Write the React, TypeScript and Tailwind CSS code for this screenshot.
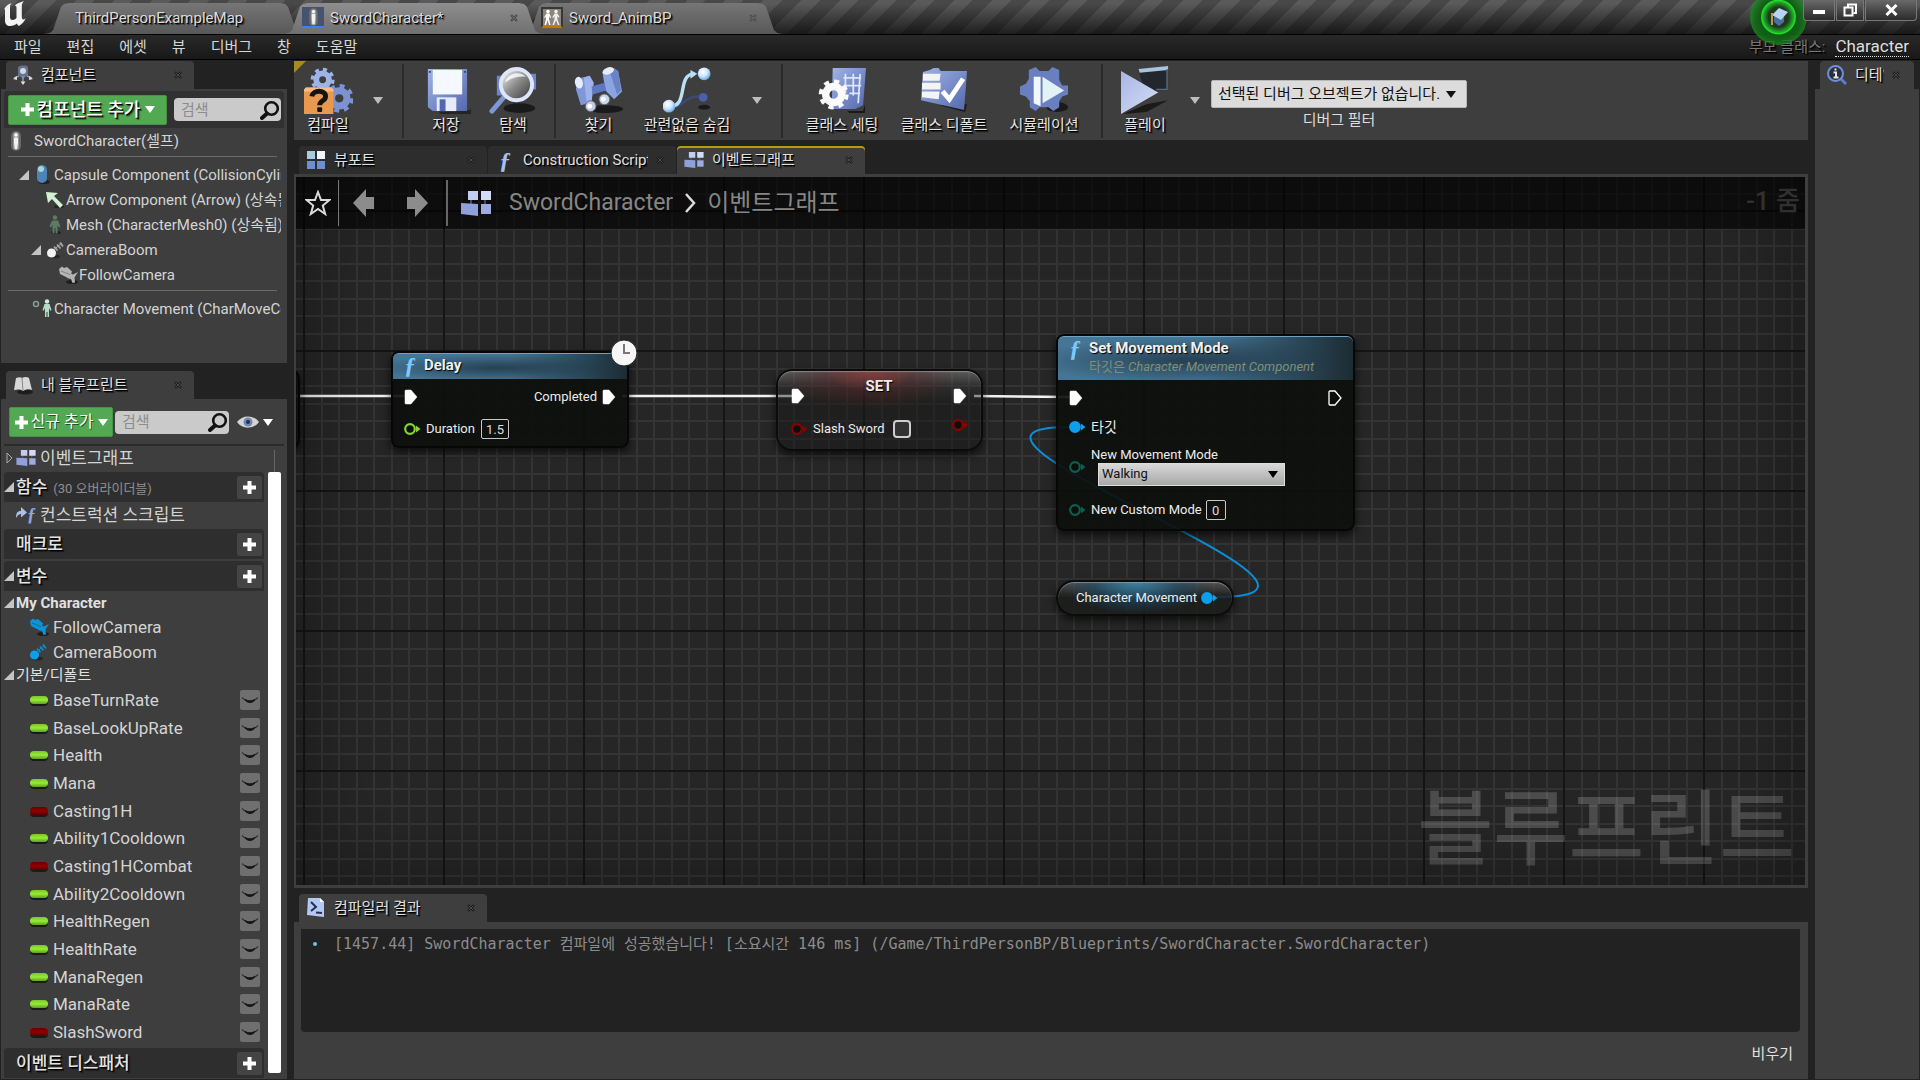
import type { ReactNode } from "react";
import { clsx } from "clsx";

const SHADOW = "[text-shadow:1px_1px_0_#000,2px_2px_1px_rgba(0,0,0,0.6)]";

/* ---------- small glyphs ---------- */

function Caret({ className }: { className?: string }) {
  return (
    <svg viewBox="0 0 10 7" className={clsx("h-[7px] w-[10px] shrink-0", className)} aria-hidden="true">
      <path d="M0 0h10L5 7z" fill="currentColor" />
    </svg>
  );
}

function Expander() {
  return (
    <svg viewBox="0 0 10 10" className="h-[10px] w-[10px] shrink-0" aria-hidden="true">
      <path d="M10 0v10H0z" fill="#c4c4c4" />
    </svg>
  );
}

function Plus({ className }: { className?: string }) {
  return (
    <svg viewBox="0 0 15 15" className={clsx("h-[15px] w-[15px] shrink-0", className)} aria-hidden="true">
      <path d="M5.500 1h4v4.500H14v4H9.500V14h-4V9.500H1v-4h4.500z" fill="#fff" />
    </svg>
  );
}

function CloseMark({ light }: { light?: boolean }) {
  return (
    <svg viewBox="0 0 8 8" className="h-2 w-2" aria-hidden="true">
      <path d="M1 1l6 6M7 1L1 7" stroke={light ? "#4a4a4a" : "#1c1c1c"} strokeWidth="2.400" />
      <path d="M1.500 1.500l5 5M6.500 1.500l-5 5" stroke={light ? "#666" : "#4a4a4a"} strokeWidth="1" />
    </svg>
  );
}

function SearchGlyph() {
  return (
    <svg viewBox="0 0 20 20" className="h-5 w-5 shrink-0" aria-hidden="true">
      <circle cx="11.500" cy="8.500" r="6.300" fill="none" stroke="#111" strokeWidth="2.600" />
      <path d="M7 13.500L2 18" stroke="#111" strokeWidth="4" strokeLinecap="round" />
    </svg>
  );
}

function GraphGlyph({ className }: { className?: string }) {
  return (
    <svg viewBox="0 0 30 25" className={clsx("shrink-0", className)} aria-hidden="true">
      <path d="M10 6v8M20 5h4v12" stroke="#55607c" strokeWidth="1.500" fill="none" />
      <rect x="7" y="0" width="10" height="9" fill="#c2cdf0" />
      <rect x="20" y="0" width="10" height="9" fill="#d3dcf6" />
      <path d="M0 12l17 1v12l-17-2z" fill="#8fa0db" />
      <rect x="20" y="13" width="10" height="10" fill="#9dabe0" />
    </svg>
  );
}

function FunctionGlyph({ className }: { className?: string }) {
  return (
    <span
      aria-hidden="true"
      className={clsx("shrink-0 font-['Liberation_Serif',serif] font-bold italic", className)}
    >
      ƒ
    </span>
  );
}

function PawnGlyph({ className }: { className?: string }) {
  return (
    <svg viewBox="0 0 12 20" className={clsx("shrink-0", className)} aria-hidden="true">
      <rect x="1" y="0" width="10" height="20" rx="5" fill="#686868" />
      <rect x="3" y="1" width="6" height="18" rx="3" fill="#949494" />
      <circle cx="6" cy="4" r="1.800" fill="#fff" />
      <path d="M4 6.500h4V12l-.8 6H4.800L4 12z" fill="#f2f2f2" />
    </svg>
  );
}

function PersonGlyph({ color, className }: { color: string; className?: string }) {
  return (
    <svg viewBox="0 0 12 19" className={clsx("shrink-0", className)} aria-hidden="true">
      <ellipse cx="7" cy="17.500" rx="5" ry="1.500" fill="#222" />
      <circle cx="6" cy="2.500" r="2.200" fill={color} />
      <path d="M3 5.500h6l2.500 6-1.500 1L8.500 10v8.500h-2V13h-1v5.500h-2V10L2 12.500l-1.500-1z" fill={color} />
    </svg>
  );
}

function BoomGlyph({ color, lines }: { color: string; lines: string }) {
  return (
    <svg viewBox="0 0 18 18" className="h-[18px] w-[18px] shrink-0" aria-hidden="true">
      <ellipse cx="8" cy="15.500" rx="6" ry="1.800" fill="#222" />
      <circle cx="5.500" cy="12" r="4.500" fill={color} />
      <path d="M8 5.500l3.500 4M11 3.500l3.500 4M14 1.500l3 4" stroke={lines} strokeWidth="1.800" />
      <path d="M8 8.500L16 2" stroke={lines} strokeWidth="1" />
    </svg>
  );
}

function CameraGlyph({ color }: { color: string }) {
  return (
    <svg viewBox="0 0 21 18" className="h-[18px] w-[21px] shrink-0" aria-hidden="true">
      <ellipse cx="14" cy="16" rx="6" ry="2" fill="#1d1d1d" />
      <path d="M1 3l3-2.500 2 1.500 3-1 5 4.500-2 5.500-3 .5L2 8z" fill={color} />
      <path d="M11 7l4 1.500L20 6l-3.500 5.500.5 5-2.500.5-1.500-4-4-1z" fill={color} />
      <path d="M3 5l9 3.500" stroke="#0004" strokeWidth="1" />
    </svg>
  );
}

/* ---------- window chrome ---------- */

type WindowTab = { label: string; icon?: ReactNode; active?: boolean };

const windowTabs: WindowTab[] = [
  { label: "ThirdPersonExampleMap" },
  {
    label: "SwordCharacter*",
    active: true,
    icon: (
      <span className="flex h-[21px] w-[22px] shrink-0 items-center justify-center border-b-2 border-[#3f7dff] bg-[#46536e]">
        <PawnGlyph className="h-[18px] w-[11px]" />
      </span>
    ),
  },
  {
    label: "Sword_AnimBP",
    icon: (
      <span className="flex h-[21px] w-[22px] shrink-0 items-center justify-center border-2 border-t-[#3a3632] border-r-[#3a3632] border-b-[#c87400] border-l-[#3a3632] bg-[#8a867e]">
        <svg viewBox="0 0 18 17" className="h-[17px] w-[18px]" aria-hidden="true">
          <circle cx="5" cy="2.500" r="1.800" fill="#fff" />
          <path d="M3.500 4.500h3l1.500 4-1 .5-1-2v3l1.500 6H6l-1.300-5L3 16H1.500L3 10V7L2 9l-1-.5z" fill="#fff" />
          <circle cx="13" cy="2.500" r="1.800" fill="#f0f0f0" />
          <path d="M11.500 4.500h3l2 3.500-1 .8-1.200-1.800v3l2.200 6H15l-2-5-2 5H9.500l2-6V7l-1.300 2-1-.5z" fill="#f0f0f0" />
        </svg>
      </span>
    ),
  },
];

function TitleBar() {
  return (
    <header className="relative flex h-[34px] shrink-0 items-end bg-[linear-gradient(#0000_10%,#000a),repeating-linear-gradient(135deg,#5a5a5a_0_13px,#484848_13px_27px)]">
      <svg viewBox="0 0 28 28" className="ml-[2px] h-[28px] w-[28px] shrink-0 self-start" aria-label="Unreal">
        <path
          d="M2 10c1-3.500 4-6 8-7-1.500 1.200-2 2-2 3.500V17c0 2 1 3 2.500 3s3-1 4-2V8c0-2-.7-2.500-2-2 1.500-2.200 4.500-3.200 9.500-5-1.600 2-2.200 3-2.200 5v10.500c0 2 .6 3 1.600 3 .9 0 1.600-.6 2.400-1.500-1.300 3.800-4 6-7 8-1-.8-1.600-1.500-2-2.500-1.500 1.500-4 2.500-6.500 2.500-3.500 0-5.300-2-5.300-5.500V10c0-1.500-.2-1.700-1-1.200z"
          fill="#f4f4f4"
        />
      </svg>
      <nav className="ml-[15px] flex" aria-label="Open assets">
        {windowTabs.map((tab) => (
          <div
            key={tab.label}
            className={clsx(
              "-ml-5 flex h-[31px] w-[259px] items-center pr-[25px] pb-[2px] first:ml-0",
              "[clip-path:polygon(0_100%,5px_96%,8px_88%,16px_12%,19px_3%,24px_0,calc(100%_-_24px)_0,calc(100%_-_19px)_3%,calc(100%_-_16px)_12%,calc(100%_-_8px)_88%,calc(100%_-_5px)_96%,100%_100%)]",
              tab.active
                ? "z-10 bg-linear-to-b from-[#8e8e8e] to-[#707070]"
                : "bg-linear-to-b from-[#767676] to-[#585858]"
            )}
          >
            <button
              className={clsx(
                "flex flex-1 items-center gap-[6px] text-[15px] leading-5 text-[#dcdcdc]",
                tab.icon ? "pl-[18px]" : "pl-[30px]",
                SHADOW
              )}
            >
              {tab.icon}
              {tab.label}
            </button>
            {tab.icon && (
              <button aria-label={`Close ${tab.label}`}>
                <CloseMark light />
              </button>
            )}
          </div>
        ))}
      </nav>
      <div className="ml-auto flex self-start">
        <button
          aria-label="Tutorials"
          className="relative z-20 -mr-1 -mt-[11px] -mb-8 flex h-[56px] w-[57px] items-center justify-center rounded-full bg-[radial-gradient(circle,#1d3a1d_25%,#1fae26_38%,#22e62b_42%,#0f5c14_45%,#117017cc_58%,#178a1dcc_70%)]"
        >
          <svg viewBox="0 0 20 20" className="h-5 w-5" aria-hidden="true">
            <path d="M5 9v6l5 4 5-4V9l-5 3z" fill="#4a6fa0" />
            <path d="M10 1l9 4-7 8-9-5z" fill="#b9d4f2" />
            <path d="M3 6v12" stroke="#b79658" strokeWidth="2" />
          </svg>
        </button>
        <div className="z-30 flex h-[21px] gap-px pr-[3px]">
          <button aria-label="Minimize" className="flex w-8 items-center justify-center rounded-bl border border-t-0 border-[#777] bg-linear-to-b from-[#6a6a6a] to-[#2c2c2c]">
            <span className="mt-1 h-1 w-3 bg-white" />
          </button>
          <button aria-label="Restore" className="flex w-[28px] items-center justify-center border border-t-0 border-[#777] bg-linear-to-b from-[#6a6a6a] to-[#2c2c2c]">
            <svg viewBox="0 0 14 14" className="h-[14px] w-[14px]" fill="none" stroke="#fff" strokeWidth="2" aria-hidden="true">
              <path d="M5 4V1.500h8V10h-2.500" />
              <rect x="1.500" y="4.500" width="8" height="8" />
            </svg>
          </button>
          <button aria-label="Close" className="flex w-[52px] items-center justify-center rounded-br border border-t-0 border-[#777] bg-linear-to-b from-[#6a6a6a] to-[#2c2c2c]">
            <svg viewBox="0 0 13 12" className="h-3 w-[13px]" aria-hidden="true">
              <path d="M1.500 1l10 10M11.500 1l-10 10" stroke="#fff" strokeWidth="3" />
            </svg>
          </button>
        </div>
      </div>
    </header>
  );
}

const menus = ["파일", "편집", "에셋", "뷰", "디버그", "창", "도움말"];

function MenuBar() {
  return (
    <div className="flex h-[26px] shrink-0 items-center border-y border-black bg-linear-to-b from-[#292929] to-[#181818] pr-[11px] pl-[14px] text-[15px] leading-5 text-[#d6d6d6]">
      <nav className="flex gap-[25px]" aria-label="Menu">
        {menus.map((m) => (
          <button key={m}>{m}</button>
        ))}
      </nav>
      <span className={clsx("ml-auto text-[#777]", SHADOW)}>부모 클래스:</span>
      <a href="#character" className="ml-[10px] border-b border-dotted border-[#ddd] text-[17px] leading-[19px] text-[#dedede]">
        Character
      </a>
    </div>
  );
}

/* ---------- panels ---------- */

function PanelTab({
  icon,
  label,
  tone = "panel",
  className = "w-[188px]",
}: {
  icon: ReactNode;
  label: string;
  tone?: "panel" | "idle" | "active";
  className?: string;
}) {
  return (
    <div
      className={clsx(
        "flex h-[28px] items-center rounded-t-sm pr-[12px] pb-px pl-[7px]",
        tone === "idle" ? "bg-[#2d2d2d]" : "bg-[#3e3e3e]",
        tone === "active" && "shadow-[inset_0_2px_0_#b89a10]",
        className
      )}
    >
      <button className="flex min-w-0 flex-1 items-center gap-2">
        <span className="flex w-5 shrink-0 justify-center">{icon}</span>
        <span className={clsx("overflow-hidden text-[15px] leading-5 whitespace-nowrap text-[#e0e0e0]", SHADOW)}>
          {label}
        </span>
      </button>
      <button aria-label={`Close ${label}`} className="ml-2">
        <CloseMark />
      </button>
    </div>
  );
}

function SearchField({ id, className }: { id: string; className?: string }) {
  return (
    <div className={clsx("flex h-[23px] min-w-0 items-center rounded-sm bg-[#cacaca] pr-px pl-[7px]", className)}>
      <label htmlFor={id} className="sr-only">
        검색
      </label>
      <input
        id={id}
        type="text"
        placeholder="검색"
        className="w-full min-w-0 flex-1 bg-transparent text-[15px] leading-5 text-[#222] outline-none placeholder:text-[#8d8d8d]"
      />
      <SearchGlyph />
    </div>
  );
}

function TreeRow({
  indent,
  icon,
  label,
  open,
}: {
  indent: string;
  icon: ReactNode;
  label: string;
  open?: boolean;
}) {
  return (
    <li className={clsx("flex h-[25px] items-center overflow-hidden text-[15px] leading-5 whitespace-nowrap text-[#d4d4d4]", indent)}>
      <span className="mr-1 w-[10px] shrink-0">{open && <Expander />}</span>
      <span className="mr-px flex w-[20px] shrink-0 justify-center">{icon}</span>
      <span>{label}</span>
    </li>
  );
}

function ComponentsPanel() {
  return (
    <section aria-label="컴포넌트">
      <div className="pl-[5px]">
        <PanelTab
          label="컴포넌트"
          icon={
            <svg viewBox="0 0 20 20" className="h-5 w-5" aria-hidden="true">
              <path d="M5 2l3-1.500h5L15 2v8l-5 4-5-4z" fill="#66738c" />
              <circle cx="10" cy="6" r="3" fill="#cfd8e6" />
              <path d="M10 11v7M1 13l5-2M19 13l-5-2" stroke="#8d9bb4" strokeWidth="1.500" />
              <path d="M0 14l4-3v4zM20 14l-4-3v4zM10 20l-2.500-3.500h5z" fill="#ddd" />
            </svg>
          }
        />
      </div>
      <div className="h-[274px] bg-[#3e3e3e] px-[3px] pt-[2px]">
        <div className="flex h-[37px] items-center gap-[7px] rounded-t bg-[#313131] px-1 pr-[3px]">
          <button className="flex h-[30px] w-[159px] shrink-0 items-center justify-center gap-[2px] rounded-xs border border-[#469346] bg-[#53a953] text-white">
            <Plus />
            <span className={clsx("text-lg leading-6 font-medium whitespace-nowrap", SHADOW)}>컴포넌트 추가</span>
            <Caret className="ml-[3px]" />
          </button>
          <SearchField id="component-search" className="flex-1" />
        </div>
        <ul className="pr-[3px]">
          <li className="flex h-[25px] items-center gap-3 pl-[6px] text-[15px] leading-5 text-[#d4d4d4]">
            <PawnGlyph className="h-5 w-3" />
            SwordCharacter(셀프)
          </li>
          <li className="mx-1 mt-[3px] mb-[5px] h-px bg-[#6a6a6a]" />
          <TreeRow
            indent="pl-[15px]"
            open
            label="Capsule Component (CollisionCylinder) (상속됨)"
            icon={
              <svg viewBox="0 0 14 19" className="h-[19px] w-[14px]" aria-hidden="true">
                <ellipse cx="8" cy="17" rx="6" ry="2" fill="#222" />
                <rect x="1" y="0" width="10" height="18" rx="5" fill="#4d84b8" />
                <ellipse cx="5" cy="4" rx="3" ry="3" fill="#a8d4d8" />
              </svg>
            }
          />
          <TreeRow
            indent="pl-[27px]"
            label="Arrow Component (Arrow) (상속됨)"
            icon={
              <svg viewBox="0 0 20 18" className="h-[18px] w-5" aria-hidden="true">
                <ellipse cx="14" cy="15.500" rx="5" ry="1.500" fill="#252525" />
                <path d="M1 1l12 1-4 3 9 9-3 3-8-9-4 4z" fill="#d3f2d3" />
              </svg>
            }
          />
          <TreeRow
            indent="pl-[27px]"
            label="Mesh (CharacterMesh0) (상속됨)"
            icon={<PersonGlyph color="#5d7a62" className="h-[19px] w-3" />}
          />
          <TreeRow indent="pl-[27px]" open label="CameraBoom" icon={<BoomGlyph color="#f2f2f2" lines="#a8a8a8" />} />
          <TreeRow indent="pl-[40px]" label="FollowCamera" icon={<CameraGlyph color="#b4b4b4" />} />
          <li className="mx-1 mt-[3px] mb-[5px] h-px bg-[#6a6a6a]" />
          <TreeRow
            indent="pl-[15px]"
            label="Character Movement (CharMoveComp) (상속됨)"
            icon={
              <svg viewBox="0 0 22 19" className="h-[19px] w-[22px] shrink-0" aria-hidden="true">
                <circle cx="4" cy="5" r="2.500" fill="none" stroke="#8a9a90" strokeWidth="1.500" />
                <circle cx="15" cy="2.500" r="2.200" fill="#cdeedd" />
                <path d="M12.500 5h5l2 6-1.200.8L17 9v9h-1.500v-5h-1v5H13V9l-1.300 2.800-1.200-.8z" fill="#b4dcc8" />
              </svg>
            }
          />
        </ul>
      </div>
    </section>
  );
}

const variables = [
  ["BaseTurnRate", "float"],
  ["BaseLookUpRate", "float"],
  ["Health", "float"],
  ["Mana", "float"],
  ["Casting1H", "bool"],
  ["Ability1Cooldown", "float"],
  ["Casting1HCombat", "bool"],
  ["Ability2Cooldown", "float"],
  ["HealthRegen", "float"],
  ["HealthRate", "float"],
  ["ManaRegen", "float"],
  ["ManaRate", "float"],
  ["SlashSword", "bool"],
];

function SectionHeader({ label, note, open, className }: { label: string; note?: string; open?: boolean; className?: string }) {
  return (
    <div className={clsx("flex h-[30px] shrink-0 items-center rounded-t bg-[#2e2e2e] pr-[2px]", className)}>
      <span className="mr-[2px] w-[10px]">{open && <Expander />}</span>
      <h3 className={clsx("text-[17px] leading-6 font-medium text-[#e4e4e4]", SHADOW)}>{label}</h3>
      {note && <span className="mt-1 ml-[6px] text-[13px] leading-5 text-[#8e8e8e]">{note}</span>}
      <button
        aria-label={`${label} 추가`}
        className="ml-auto flex h-[23px] w-[25px] items-center justify-center rounded-xs bg-[#444]"
      >
        <Plus />
      </button>
    </div>
  );
}

function MyBlueprintPanel() {
  return (
    <section aria-label="내 블루프린트" className="mt-2 flex min-h-0 flex-1 flex-col">
      <div className="pl-[5px]">
        <PanelTab
          label="내 블루프린트"
          icon={
            <svg viewBox="0 0 20 20" className="h-5 w-5" aria-hidden="true">
              <ellipse cx="12" cy="17" rx="8" ry="2.500" fill="#1d1d1d" />
              <path d="M3 3c3-1 5-1 6 0 2-1.500 5-1.500 7 0l3 12c-3-1.500-6-1-9 1-3-2-6-1.500-9-1z" fill="#d8d8d8" />
              <path d="M9 3l1 13" stroke="#888" />
            </svg>
          }
        />
      </div>
      <div className="flex min-h-0 flex-1 flex-col bg-[#3e3e3e] px-[3px] pt-2">
        <div className="flex h-[30px] shrink-0 items-center pl-[5px]">
          <button className="flex h-[30px] w-[104px] shrink-0 items-center justify-center gap-[2px] rounded-xs border border-[#469346] bg-[#53a953] text-white">
            <Plus />
            <span className="text-base leading-6 whitespace-nowrap [text-shadow:1px_1px_0_#0008]">신규 추가</span>
            <Caret className="ml-[3px]" />
          </button>
          <SearchField id="blueprint-search" className="ml-[2px] w-[114px]" />
          <button aria-label="보기 옵션" className="ml-[8px] flex items-center gap-1 text-white">
            <svg viewBox="0 0 22 14" className="h-[14px] w-[22px]" aria-hidden="true">
              <path d="M0 7C5-.5 17-.5 22 7 17 14.500 5 14.500 0 7z" fill="#d4d4d4" />
              <circle cx="11" cy="7" r="4.500" fill="#7086b4" />
              <circle cx="11" cy="7" r="2" fill="#26304a" />
            </svg>
            <Caret />
          </button>
        </div>
        <div className="mt-[7px] flex min-h-0 flex-1 border-t-2 border-[#2c2c2c]">
          <div className="flex min-w-0 flex-1 flex-col">
            <div className="flex h-[23px] items-center pl-[2px] text-[17px] leading-6 text-[#d4d4d4]">
              <svg viewBox="0 0 7 12" className="mr-[3px] h-3 w-[7px]" aria-hidden="true">
                <path d="M1 1l5 5-5 5z" fill="none" stroke="#aaa" />
              </svg>
              <GraphGlyph className="mr-1 h-4 w-5" />
              이벤트그래프
            </div>
            <SectionHeader className="mt-[3px]" label="함수" note="(30 오버라이더블)" open />
            <div className="flex h-[26px] items-center pl-3 text-[17px] leading-6 text-[#d4d4d4]">
              <span className="mr-1 flex w-5 items-center">
                <svg viewBox="0 0 11 12" className="mb-1 h-3 w-[11px] shrink-0" aria-hidden="true">
                  <path d="M0 11C0 5 2 4 5 4V0l6 5.500-6 5V7C3 7 2 8 0 11z" fill="#a9bfe8" />
                </svg>
                <FunctionGlyph className="text-lg leading-5 text-[#8fa6dc]" />
              </span>
              컨스트럭션 스크립트
            </div>
            <SectionHeader label="매크로" className="mt-px" />
            <SectionHeader className="mt-[2px]" label="변수" open />
            <h4 className="flex h-[23px] items-center gap-[2px] text-[15px] leading-5 font-bold text-[#e0e0e0]">
              <Expander />
              My Character
            </h4>
            <ul className="text-[17px] leading-6 text-[#d4d4d4]">
              <li className="flex h-[25px] items-center gap-[3px] pl-[25px]">
                <CameraGlyph color="#0d93d8" />
                FollowCamera
              </li>
              <li className="flex h-[25px] items-center gap-[6px] pl-[25px]">
                <BoomGlyph color="#0ba0ee" lines="#0b8ad0" />
                CameraBoom
              </li>
            </ul>
            <h4 className="flex h-[22px] items-center gap-[2px] text-[15px] leading-5 text-[#e0e0e0]">
              <Expander />
              기본/디폴트
            </h4>
            <ul className="flex flex-1 flex-col text-[17px] leading-6 text-[#d4d4d4]">
              {variables.map(([name, type]) => (
                <li key={name} className="flex flex-1 items-center pr-1 pl-[26px]">
                  <span
                    className={clsx(
                      "mr-[5px] h-2 w-[18px] rounded-sm shadow-[0_2px_0_#1a1a1a]",
                      type === "float"
                        ? "bg-linear-to-b from-[#7cc62c] via-[#97ea38] to-[#5fa01e]"
                        : "bg-linear-to-b from-[#6a0000] via-[#900000] to-[#5a0000]"
                    )}
                  />
                  {name}
                  <button
                    aria-label={`${name} 표시`}
                    className="ml-auto flex h-5 w-5 items-center justify-center rounded-xs bg-[#6f6f6f]"
                  >
                    <svg viewBox="0 0 18 8" className="h-2 w-[18px]" aria-hidden="true">
                      <path d="M1 1.500c4 4.500 12 4.500 16 0" fill="none" stroke="#333" strokeWidth="1.200" />
                      <path d="M4 3.500c3 2 7 2 10 0-2 4-8 4-10 0z" fill="#151515" stroke="#151515" />
                    </svg>
                  </button>
                </li>
              ))}
            </ul>
            <SectionHeader className="mt-[2px] mb-px" label="이벤트 디스패처" />
          </div>
          <div className="mr-[3px] ml-1 flex w-[13px] flex-col items-center pt-1 pb-[6px]">
            <span className="h-[22px] w-px bg-[#666]" />
            <span className="w-full flex-1 rounded-xs bg-white" />
          </div>
        </div>
      </div>
    </section>
  );
}

/* ---------- toolbar ---------- */

// A gear is a ring plus a dashed ring for the teeth.
function Gear({ cx, cy, r, color, teeth = 8 }: { cx: number; cy: number; r: number; color: string; teeth?: number }) {
  const step = (2 * Math.PI * r) / teeth / 2;
  return (
    <g fill="none" stroke={color}>
      <circle cx={cx} cy={cy} r={r * 0.65} strokeWidth={r * 0.6} />
      <circle cx={cx} cy={cy} r={r} strokeWidth={r * 0.45} strokeDasharray={`${step} ${step}`} />
    </g>
  );
}

const Defs = () => (
  <svg className="absolute h-0 w-0" aria-hidden="true">
    <defs>
      <linearGradient id="blue" x1="0" y1="0" x2="1" y2="1">
        <stop offset="0" stopColor="#a0b4e8" />
        <stop offset="1" stopColor="#5468ac" />
      </linearGradient>
      <linearGradient id="pale" x1="0" y1="0" x2="1" y2="1">
        <stop offset="0" stopColor="#a9b6e6" />
        <stop offset="1" stopColor="#d4def4" />
      </linearGradient>
      <linearGradient id="glass" x1="0" y1="0" x2="1" y2="1">
        <stop offset="0" stopColor="#fff" />
        <stop offset="0.500" stopColor="#888" />
        <stop offset="1" stopColor="#333" />
      </linearGradient>
      <radialGradient id="ball" cx="0.400" cy="0.350" r="0.700">
        <stop offset="0" stopColor="#fff" />
        <stop offset="0.500" stopColor="#cfe6ff" />
        <stop offset="1" stopColor="#5e9fe0" />
      </radialGradient>
    </defs>
  </svg>
);

const icons = {
  compile: (
    <>
      <Gear cx={19} cy={14} r={10} color="#9db4e8" />
      <Gear cx={36} cy={33} r={12} color="#7d92d2" />
      <path d="M0 24l2-2h26l2 2v25H0z" fill="#e8994d" />
      <path d="M0 24l2-2h26l2 2v2H0z" fill="#f5bd83" />
      <path d="M8 31c1-7 14-7 14 0 0 5-6 4-6 9" fill="none" stroke="#141414" strokeWidth="5" />
      <rect x="13.500" y="42" width="5" height="5" rx="1" fill="#141414" />
    </>
  ),
  save: (
    <g transform="translate(3 0)">
      <path d="M12 45h34l2-6v10H16z" fill="#1a1a1a" opacity=".7" />
      <path d="M3 3h40v43H8l-5-4z" fill="url(#blue)" />
      <path d="M8 4h30v25H8z" fill="#f6f8ff" />
      <path d="M12 32h20v14H12z" fill="#e6eafa" />
      <path d="M15 34h6v12h-6z" fill="#5067ae" />
      <path d="M4 5h2v2H4zM40 5h2v2h-2z" fill="#33427a" />
    </g>
  ),
  browse: (
    <>
      <ellipse cx="31" cy="43" rx="16" ry="5" fill="#1a1a1a" />
      <path d="M8 10h10v20H8zM38 8h10v16H38z" fill="#6e86c8" />
      <path d="M15 32L3 46" stroke="#8097d6" strokeWidth="5" strokeLinecap="round" />
      <circle cx="28" cy="19" r="16" fill="url(#glass)" stroke="#dfe6fb" strokeWidth="4" />
      <path d="M16 17c3-9 14-13 22-6-8-1-15 1-22 6z" fill="#fff" opacity=".8" />
    </>
  ),
  find: (
    <>
      <ellipse cx="32" cy="44" rx="18" ry="4" fill="#1a1a1a" />
      <path d="M3 13l13-3 4 7-2 20-11 3-5-16z" fill="#7f97d6" />
      <path d="M10 12l6-2 4 7-2 19-5 2z" fill="#9db3ec" />
      <path d="M29 6l10-4 6 3 4 21-8 8-9-9z" fill="#8ba4e2" />
      <path d="M36 4l5-2 4 3 3 20-4 4z" fill="#6a82c6" />
      <path d="M18 21l13-4 2 8-14 4z" fill="#5f77c0" />
      <ellipse cx="5" cy="17" rx="4" ry="6" transform="rotate(-12 5 17)" fill="#e6ecfb" />
      <ellipse cx="35" cy="5" rx="6" ry="3.500" transform="rotate(-20 35 5)" fill="#e6ecfb" />
      <circle cx="17" cy="41" r="5.500" fill="#c4cbdc" stroke="#56617e" />
      <circle cx="16" cy="41" r="2.500" fill="#fff" />
      <circle cx="31" cy="34" r="5.500" fill="#c9d3ec" stroke="#56617e" />
      <circle cx="30" cy="34" r="2.500" fill="#fff" />
    </>
  ),
  hide: (
    <>
      <ellipse cx="42" cy="42" rx="6" ry="2.500" fill="#1a1a1a" />
      <path d="M8 42c14 0 12-11 30-11" fill="none" stroke="#3a4a75" strokeWidth="3" />
      <circle cx="41" cy="32" r="4.500" fill="#4a60a8" />
      <path d="M8 41c18 0 6-33 24-33" fill="none" stroke="#b9e0f4" strokeWidth="3.500" />
      <path d="M28 4l7 4-7 5z" fill="#b9e0f4" />
      <circle cx="42" cy="8" r="6.500" fill="url(#ball)" />
      <circle cx="6" cy="41" r="6.500" fill="url(#ball)" />
    </>
  ),
  settings: (
    <>
      <path d="M30 46h16l2-7v9H32z" fill="#1a1a1a" />
      <path d="M15 2h34l-3 38-8 4H14z" fill="url(#blue)" />
      <path d="M28 8v20M36 8v22M43 8l-2 30M26 12h18M28 20h16M32 28h11" stroke="#dce5fb" strokeWidth="1.800" />
      <Gear cx={16} cy={29} r={12.5} color="#fafafa" />
    </>
  ),
  defaults: (
    <>
      <path d="M20 40l26 7 2-8z" fill="#1a1a1a" />
      <path d="M10 4l4-2h5l2 3h27l-3 40-44-10 2-29z" fill="url(#blue)" />
      <path d="M3 8h18l-1 7H3zM2 17h19v7H2zM2 26h18l-1 8-17-2z" fill="#f4f4f4" />
      <path d="M23 26l7 8L44 13" fill="none" stroke="#fff" strokeWidth="5" />
    </>
  ),
  simulate: (
    <>
      <ellipse cx="38" cy="42" rx="11" ry="5" fill="#1a1a1a" />
      <path
        d="M9 4l7-3 4 4h9l4-4 7 3v10l3 6h6v9l-6 2-3 5v6l-6 4-5-4h-9l-4 4-6-4v-6l-4-5-6-2v-8l6-3 3-5z"
        fill="#6a7fc0"
      />
      <path d="M14 11h7v30l-7-3z" fill="#f2f8fa" />
      <path d="M23 11l22 14-22 13z" fill="#e2f3f5" />
    </>
  ),
  play: (
    <>
      <path d="M2 49l24-10 22-4-22 12z" fill="#1a1a1a" />
      <path d="M18 4l30-4v25l-24 1z" fill="#23262c" />
      <path d="M18 3l30-3v4L19 7z" fill="#a9c4e0" />
      <path d="M47 3v21H36" stroke="#5c6b80" strokeWidth="1.500" fill="none" />
      <path d="M0 5l38 22L0 49z" fill="url(#pale)" />
    </>
  ),
};

function ToolButton({ icon, label, className }: { icon: keyof typeof icons; label: string; className: string }) {
  return (
    <button className={clsx("flex h-full flex-col items-center pt-[5px]", className)}>
      <svg viewBox="0 0 50 50" className="h-[49px] w-[49px]" aria-hidden="true">
        {icons[icon]}
      </svg>
      <span className={clsx("text-[15px] leading-5 whitespace-nowrap text-[#e4e4e4]", SHADOW)}>{label}</span>
    </button>
  );
}

function ToolArrow({ label }: { label: string }) {
  return (
    <button aria-label={label} className="flex h-full w-8 items-center justify-center text-[#bdbdbd]">
      <Caret />
    </button>
  );
}

const ToolDivider = () => <span className="mx-2 h-[74px] w-[2px] bg-[#2a2a2a]" />;

function Toolbar() {
  return (
    <div className="relative flex h-[79px] shrink-0 items-center bg-[#3e3e3e]">
      <span className="absolute top-0 left-0 h-3 w-3 bg-[#a88a20] [clip-path:polygon(0_0,100%_0,0_100%)]" />
      <ToolButton icon="compile" label="컴파일" className="w-[68px]" />
      <ToolArrow label="컴파일 옵션" />
      <ToolDivider />
      <ToolButton icon="save" label="저장" className="w-[68px]" />
      <ToolButton icon="browse" label="탐색" className="w-[66px]" />
      <ToolDivider />
      <ToolButton icon="find" label="찾기" className="w-[69px]" />
      <ToolButton icon="hide" label="관련없음 숨김" className="w-[108px]" />
      <ToolArrow label="숨김 옵션" />
      <ToolDivider />
      <ToolButton icon="settings" label="클래스 세팅" className="w-[102px]" />
      <ToolButton icon="defaults" label="클래스 디폴트" className="w-[102px]" />
      <ToolButton icon="simulate" label="시뮬레이션" className="w-[98px]" />
      <ToolDivider />
      <ToolButton icon="play" label="플레이" className="w-[68px]" />
      <ToolArrow label="플레이 옵션" />
      <div className="flex flex-col items-center pt-2">
        <div className="relative">
          <select
            id="debug-object"
            className="block h-[28px] w-[256px] appearance-none rounded-xs border border-[#b8b8b8] bg-[#dcdcdc] pl-[6px] text-[15px] leading-5 text-[#111]"
          >
            <option>선택된 디버그 오브젝트가 없습니다.</option>
          </select>
          <Caret className="pointer-events-none absolute top-[11px] right-[11px] text-[#111]" />
        </div>
        <label htmlFor="debug-object" className="mt-[2px] text-[15px] leading-5 text-[#dcdcdc]">
          디버그 필터
        </label>
      </div>
    </div>
  );
}

/* ---------- graph ---------- */

function ExecPin({ open }: { open?: boolean }) {
  return (
    <svg viewBox="0 0 14 16" className="h-4 w-[14px] shrink-0" aria-hidden="true">
      <path
        d="M1 2q0-1 1-1h5l6 7-6 7H2q-1 0-1-1z"
        fill={open ? "#0c0e0c" : "#fff"}
        stroke="#fff"
        strokeWidth={open ? 1.3 : 0.5}
      />
    </svg>
  );
}

function DataPin({ color, filled, className }: { color: string; filled?: boolean; className?: string }) {
  return (
    <svg viewBox="0 0 17 12" className={clsx("h-3 w-[17px] shrink-0", className)} aria-hidden="true">
      <path d="M12 2.500L16.500 6 12 9.500z" fill={color} />
      <circle cx="6" cy="6" r="4.800" fill={filled ? color : "#0c0e0c"} stroke={color} strokeWidth="2.200" />
    </svg>
  );
}

function GraphNode({ title, subtitle, className, children }: { title: string; subtitle?: string; className: string; children: ReactNode }) {
  return (
    <article
      className={clsx(
        "absolute rounded-lg border-2 border-[#060706] bg-[#0d0f0d]/92 text-[13px] leading-4 text-[#ececec] shadow-[0_4px_8px_#000a]",
        className
      )}
    >
      <header className="rounded-t-md border-t border-[#6fa3c4] bg-[radial-gradient(ellipse_at_45%_55%,#203646cc_5%,#20364600_70%),linear-gradient(90deg,#457695_0,#457695_50%,#1c2c34)] pt-[2px] pb-[5px] pl-[11px]">
        <div className="flex items-center gap-[6px]">
          <FunctionGlyph className="w-[14px] text-[24px] leading-[18px] text-[#7cc8ff]" />
          <h2 className="text-[15px] leading-[18px] font-bold text-[#f0f0f0] [text-shadow:1px_1px_1px_#000]">{title}</h2>
        </div>
        {subtitle && (
          <p className="pt-[1px] pl-5 leading-[17px] whitespace-nowrap text-[#7f8f78]">
            타깃은 <em>{subtitle}</em>
          </p>
        )}
      </header>
      {children}
    </article>
  );
}

function ValueBox({ id, value, className }: { id: string; value: string; className: string }) {
  return (
    <input
      id={id}
      defaultValue={value}
      className={clsx("h-5 rounded-xs border border-[#c8c8c8] bg-transparent text-center text-[13px] text-[#ddd]", className)}
    />
  );
}

function EventGraph() {
  return (
    <div className="relative min-h-0 flex-1 overflow-hidden bg-[#262626]">
      <svg className="absolute inset-0 h-full w-full" aria-hidden="true">
        <defs>
          <pattern id="grid" x="7" y="33" width="140" height="140" patternUnits="userSpaceOnUse">
            <path
              d="M19 0v140M36 0v140M54 0v140M71 0v140M89 0v140M106 0v140M124 0v140M0 19h140M0 36h140M0 54h140M0 71h140M0 89h140M0 106h140M0 124h140"
              stroke="#343434"
              strokeWidth="2"
            />
            <path d="M1 0v140M0 1h140" stroke="#151515" strokeWidth="2" />
          </pattern>
        </defs>
        <rect width="100%" height="100%" fill="url(#grid)" />
        <g fill="none" stroke="#f2f2f2" strokeWidth="2.500">
          <path d="M0 219h110M326 219h172M678 219L775 220" />
          <path d="M921 420C1106 420 594 250 773 250" stroke="#0b8fd8" strokeWidth="2" />
        </g>
      </svg>

      <p className="absolute right-[10px] bottom-0 text-[82px] leading-[110px] font-medium text-white/18">블루프린트</p>

      {/* node scrolled out on the left */}
      <div className="absolute top-[193px] -left-[60px] h-[78px] w-16 rounded-lg border-2 border-[#060706] bg-[#0d0f0d]/92 shadow-[0_4px_8px_#000a]" />

      <GraphNode title="Delay" className="top-[174px] left-[95px] w-[238px]">
        <div className="flex h-[36px] items-center gap-[5px] px-[11px]">
          <ExecPin />
          <span className="ml-auto">Completed</span>
          <ExecPin />
        </div>
        <div className="mb-[3px] flex h-[28px] items-center pl-[11px]">
          <DataPin color="#86d62f" />
          <label htmlFor="duration" className="mr-[6px] ml-[5px]">
            Duration
          </label>
          <ValueBox id="duration" value="1.5" className="w-[28px]" />
        </div>
        <svg viewBox="0 0 28 28" className="absolute -top-[14px] -right-[11px] h-[28px] w-[28px]" aria-hidden="true">
          <circle cx="14" cy="14" r="13" fill="#f6f6f6" stroke="#222" strokeWidth="1" />
          <path d="M14 5v9h6" fill="none" stroke="#777" strokeWidth="2" />
        </svg>
      </GraphNode>

      <article className="absolute top-[192px] left-[480px] w-[207px] rounded-2xl border-2 border-[#0b0b0b] bg-[radial-gradient(ellipse_90px_40px_at_45%_0,#8c3a3add,#5a202066_50%,#0000),linear-gradient(#8a8a8a88_0,#33333366_16px,#16181680_40%)] text-[13px] leading-4 text-[#ececec] shadow-[inset_0_1px_1px_#aaa9,0_4px_8px_#000a]">
        <div className="flex h-[44px] items-center justify-between pt-[6px] pr-[14px] pl-[13px]">
          <ExecPin />
          <h2 className="self-start text-[15px] leading-[18px] font-bold [text-shadow:1px_1px_1px_#000]">SET</h2>
          <ExecPin />
        </div>
        <div className="mb-[6px] flex h-[28px] items-center pr-[12px] pl-[13px]">
          <DataPin color="#8c0000" />
          <label htmlFor="slash" className="mr-2 ml-[5px]">
            Slash Sword
          </label>
          <input
            id="slash"
            type="checkbox"
            className="h-[18px] w-[18px] appearance-none rounded border-2 border-[#cfcfcf] bg-[#333]"
          />
          <DataPin color="#8c0000" className="mt-1 ml-auto self-start" />
        </div>
      </article>

      <GraphNode
        title="Set Movement Mode"
        subtitle="Character Movement Component"
        className="top-[157px] left-[760px] w-[299px]"
      >
        <div className="flex h-[35px] items-center justify-between px-[11px]">
          <ExecPin />
          <ExecPin open />
        </div>
        <div className="flex h-6 items-center gap-[5px] pl-[11px]">
          <DataPin color="#0ba0ee" filled />
          <span className="text-sm leading-4">타깃</span>
        </div>
        <div className="flex h-[56px] items-center gap-[5px] pl-[11px]">
          <DataPin color="#0a5f52" />
          <div className="flex flex-col pb-[2px]">
            <label htmlFor="mode">New Movement Mode</label>
            <div className="relative ml-[7px]">
              <select
                id="mode"
                className="block h-[23px] w-[187px] appearance-none border border-[#ddd] bg-linear-to-b from-[#d8d8d8] to-[#a8a8a8] pl-[3px] text-[13px] text-[#111]"
              >
                <option>Walking</option>
              </select>
              <Caret className="pointer-events-none absolute top-2 right-[7px] text-black" />
            </div>
          </div>
        </div>
        <div className="mb-1 flex h-[30px] items-center pl-[11px]">
          <DataPin color="#0a5f52" />
          <label htmlFor="custom" className="mr-1 ml-[5px]">
            New Custom Mode
          </label>
          <ValueBox id="custom" value="0" className="w-5" />
        </div>
      </GraphNode>

      <article className="absolute top-[403px] left-[760px] flex h-9 w-[178px] items-center justify-end gap-1 rounded-full border-2 border-[#0b0b0b] bg-[radial-gradient(ellipse_75px_32px_at_45%_0,#3a8ab0dd,#1d4a6699_60%,#0000),linear-gradient(#77777788,#1a1c1acc_45%)] pr-[14px] text-[13px] leading-4 text-[#ececec] shadow-[inset_0_1px_1px_#aaa9,0_4px_8px_#000a]">
        Character Movement
        <DataPin color="#0ba0ee" filled />
      </article>

      <div className="pointer-events-none absolute inset-0 shadow-[inset_0_0_90px_#0006]" />

      <div className="absolute inset-x-0 top-0 flex h-[52px] items-center bg-black/60 pl-[9px]">
        <button aria-label="즐겨찾기">
          <svg viewBox="0 0 26 26" className="h-[26px] w-[26px]" aria-hidden="true">
            <path
              d="M13 2l3 8h8.500l-6.700 5.500 2.400 8.500L13 19l-7.200 5 2.400-8.500L1.500 10H10z"
              fill="none"
              stroke="#dcdcdc"
              strokeWidth="2"
            />
          </svg>
        </button>
        <span className="ml-[7px] h-[46px] w-px bg-[#777]" />
        {["뒤로", "앞으로"].map((label, i) => (
          <button key={label} aria-label={label} className={i === 0 ? "ml-[14px]" : "ml-[31px]"}>
            <svg viewBox="0 0 22 28" className={clsx("h-[28px] w-[22px]", i === 1 && "rotate-180")} aria-hidden="true">
              <path d="M0 14L13 0v8h8v12h-8v8z" fill="#8c8c8c" />
            </svg>
          </button>
        ))}
        <span className="ml-[18px] h-[46px] w-[2px] bg-[#666]" />
        <GraphGlyph className="ml-[13px] h-[25px] w-[30px]" />
        <nav className="ml-[18px] flex items-center text-2xl leading-8 text-[#868686]" aria-label="Breadcrumb">
          <a href="#sword" className="text-[23px]">
            SwordCharacter
          </a>
          <svg viewBox="0 0 12 20" className="mx-[11px] h-5 w-3" aria-hidden="true">
            <path d="M2 1l8 9-8 9" fill="none" stroke="#dcdcdc" strokeWidth="2.500" />
          </svg>
          <a href="#graph">이벤트그래프</a>
        </nav>
        <span className="mr-[5px] ml-auto pb-1 text-[26px] leading-8 font-medium text-[#303030]">-1 줌</span>
      </div>
    </div>
  );
}

function CompilerResults() {
  return (
    <section aria-label="컴파일러 결과" className="mt-[6px] shrink-0">
      <div className="pl-[5px]">
        <PanelTab
          label="컴파일러 결과"
          icon={
            <svg viewBox="0 0 18 19" className="h-[19px] w-[18px]" aria-hidden="true">
              <path d="M1 0h12l4 4v15L0 17z" fill="#b4c8f4" />
              <path d="M13 0l4 4h-4z" fill="#fff" />
              <path d="M4 4l5 5-5 4M9 14.500l6 .5" fill="none" stroke="#26304c" strokeWidth="2" />
            </svg>
          }
        />
      </div>
      <div className="bg-[#3e3e3e] pt-[7px] pr-2 pl-[7px]">
        <ul className="h-[103px] rounded-b bg-[#222] pt-[5px] pl-3 font-['DejaVu_Sans_Mono','Noto_Sans_CJK_KR',monospace] text-[15px] leading-5 text-[#8c8c8c]">
          <li className="flex items-center">
            <span className="mr-[17px] h-1 w-1 rounded-full bg-[#6cc0f4]" />
            [1457.44] SwordCharacter 컴파일에 성공했습니다! [소요시간 146 ms]
            (/Game/ThirdPersonBP/Blueprints/SwordCharacter.SwordCharacter)
          </li>
        </ul>
        <div className="flex h-[47px] items-center justify-end pr-[7px] pb-1">
          <button className="text-[15px] leading-5 text-[#e0e0e0]">비우기</button>
        </div>
      </div>
    </section>
  );
}

export default function App() {
  return (
    <div className="flex h-screen flex-col overflow-hidden bg-[#222] font-[Roboto,'Noto_Sans_CJK_KR',sans-serif]">
      <Defs />
      <TitleBar />
      <MenuBar />
      <div className="flex min-h-0 flex-1 gap-[7px] pt-px pr-px pb-px pl-px">
        <aside className="flex w-[286px] shrink-0 flex-col">
          <ComponentsPanel />
          <MyBlueprintPanel />
        </aside>
        <main className="flex min-w-0 flex-1 flex-col">
          <Toolbar />
          <div className="mt-[6px] flex shrink-0 gap-px pl-[5px]">
            <PanelTab
              tone="idle"
              label="뷰포트"
              icon={
                <svg viewBox="0 0 18 18" className="h-[18px] w-[18px]" aria-hidden="true">
                  <path d="M0 0h8v8H0z" fill="#a9cbe0" />
                  <path d="M10 0h8v8h-8z" fill="#eef6fb" />
                  <path d="M0 10h8v8H0zM10 10h8v8h-8z" fill="#6d8fd0" />
                </svg>
              }
            />
            <PanelTab
              tone="idle"
              label="Construction Script"
              icon={<FunctionGlyph className="text-2xl leading-6 text-[#a6c0f4]" />}
            />
            <PanelTab tone="active" label="이벤트그래프" icon={<GraphGlyph className="h-4 w-5" />} />
          </div>
          <div className="flex min-h-0 flex-1 flex-col border-[3px] border-l-2 border-[#3e3e3e]">
            <EventGraph />
          </div>
          <CompilerResults />
        </main>
        <aside className="flex w-[104px] shrink-0 flex-col" aria-label="디테일">
          <div className="pl-[5px]">
            <PanelTab
              label="디테일"
              className="w-[94px] pr-[14px]"
              icon={
                <svg viewBox="0 0 20 20" className="h-5 w-5" aria-hidden="true">
                  <path d="M13 13l6 6" stroke="#5b7bd0" strokeWidth="3" />
                  <circle cx="8.500" cy="8.500" r="7.500" fill="#2a2f3c" stroke="#6f8fdc" strokeWidth="2" />
                  <path d="M8.500 3.500v2M6.500 7.500h2.500v5M6.500 12.500h5" stroke="#e6e6e6" strokeWidth="2" />
                </svg>
              }
            />
          </div>
          <div className="flex-1 bg-[#3e3e3e]" />
        </aside>
      </div>
    </div>
  );
}
